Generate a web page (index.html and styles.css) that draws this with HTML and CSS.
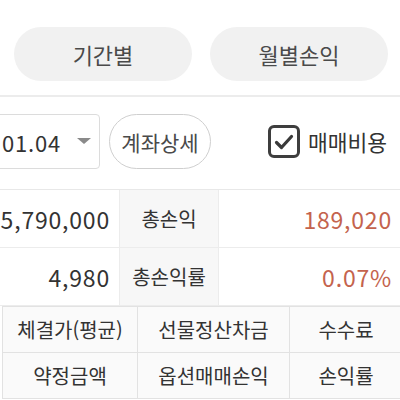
FILE: index.html
```html
<!DOCTYPE html>
<html lang="ko">
<head>
<meta charset="utf-8">
<link rel="stylesheet" href="styles.css">
</head>
<body>
<div class="page">
  <div class="tabs">
    <div class="tab">기간별</div>
    <div class="tab">월별손익</div>
  </div>
  <div class="controls">
    <div class="select">
      <span class="select-text">01.04</span>
      <span class="caret"></span>
    </div>
    <div class="pill">계좌상세</div>
    <div class="check">
      <span class="box">
        <svg width="22" height="22" viewBox="0 0 22 22"><path d="M3.5 11.5 L8.5 16.5 L18.5 5.5" fill="none" stroke="#3a3a3a" stroke-width="3.2" stroke-linecap="round" stroke-linejoin="round"/></svg>
      </span>
      <span class="check-label">매매비용</span>
    </div>
  </div>
  <div class="summary">
    <div class="cell val">5,790,000</div>
    <div class="cell lab">총손익</div>
    <div class="cell val red">189,020</div>
    <div class="cell val">4,980</div>
    <div class="cell lab">총손익률</div>
    <div class="cell val red">0.07%</div>
  </div>
  <div class="head">
    <div class="hcell">체결가(평균)</div>
    <div class="hcell">선물정산차금</div>
    <div class="hcell">수수료</div>
    <div class="hcell">약정금액</div>
    <div class="hcell">옵션매매손익</div>
    <div class="hcell">손익률</div>
  </div>
</div>
</body>
</html>
```
FILE: styles.css
```css
html, body {
  margin: 0;
  padding: 0;
  background: #fff;
}
body {
  font-family: "Noto Sans CJK KR", "Noto Sans", sans-serif;
  font-weight: 400;
  color: #333;
  width: 400px;
  height: 400px;
  overflow: hidden;
}
.tabs {
  display: flex;
  gap: 18px;
  padding: 27px 0 0 14px;
  height: 97px;
  box-sizing: border-box;
  border-bottom: 2px solid #ececec;
}
.tab {
  width: 178px;
  height: 54px;
  border-radius: 27px;
  background: #f1f1f1;
  display: flex;
  align-items: center;
  justify-content: center;
  font-size: 22px;
  color: #4a4a4a;
}
.controls {
  display: flex;
  align-items: center;
  height: 93px;
  padding-bottom: 3px;
  border-bottom: 1.5px solid #e8e8e8;
  box-sizing: border-box;
}
.select {
  width: 120px;
  margin-left: -20px;
  height: 55px;
  box-sizing: border-box;
  border: 1.5px solid #dcdcdc;
  border-radius: 4px;
  display: flex;
  align-items: center;
  padding-left: 21px;
  position: relative;
}
.select-text {
  font-size: 22px;
  color: #333;
  letter-spacing: 0.8px;
}
.caret {
  position: absolute;
  left: 96px;
  top: 23px;
  width: 0;
  height: 0;
  border-left: 7px solid transparent;
  border-right: 7px solid transparent;
  border-top: 6px solid #8a8a8a;
}
.pill {
  margin-left: 9px;
  width: 102px;
  height: 55px;
  box-sizing: border-box;
  border: 1.5px solid #cfcfcf;
  border-radius: 28px;
  display: flex;
  align-items: center;
  justify-content: center;
  font-size: 21px;
  color: #4a4a4a;
}
.check {
  margin-left: 57px;
  display: flex;
  align-items: center;
  gap: 8px;
}
.box {
  width: 32px;
  height: 33px;
  box-sizing: border-box;
  border: 3px solid #3e3e3e;
  border-radius: 6px;
  display: flex;
  align-items: center;
  justify-content: center;
}
.check-label {
  font-size: 21.5px;
  color: #333;
}
.summary {
  display: grid;
  grid-template-columns: 119px 100px 181px;
  grid-auto-rows: 58px;
}
.cell {
  display: flex;
  align-items: center;
  border-bottom: 1px solid #ececec;
  box-sizing: border-box;
}
.val {
  justify-content: flex-end;
  padding-right: 9px;
  font-size: 23px;
  letter-spacing: 0.8px;
  color: #333;
}
.lab {
  justify-content: center;
  background: #f7f7f7;
  border-left: 1px solid #ececec;
  border-right: 1px solid #ececec;
  font-size: 20px;
  color: #333;
}
.red {
  color: #c4634d;
  padding-right: 8px;
}
.head {
  display: grid;
  grid-template-columns: 135px 152px 113px;
  grid-auto-rows: 46px;
  margin-left: 2px;
  border-top: 1px solid #e2e2e2;
}
.hcell {
  display: flex;
  align-items: center;
  justify-content: center;
  background: #fafafa;
  border-left: 1px solid #e2e2e2;
  border-bottom: 1px solid #e2e2e2;
  box-sizing: border-box;
  font-size: 20px;
  color: #333;
}
```
